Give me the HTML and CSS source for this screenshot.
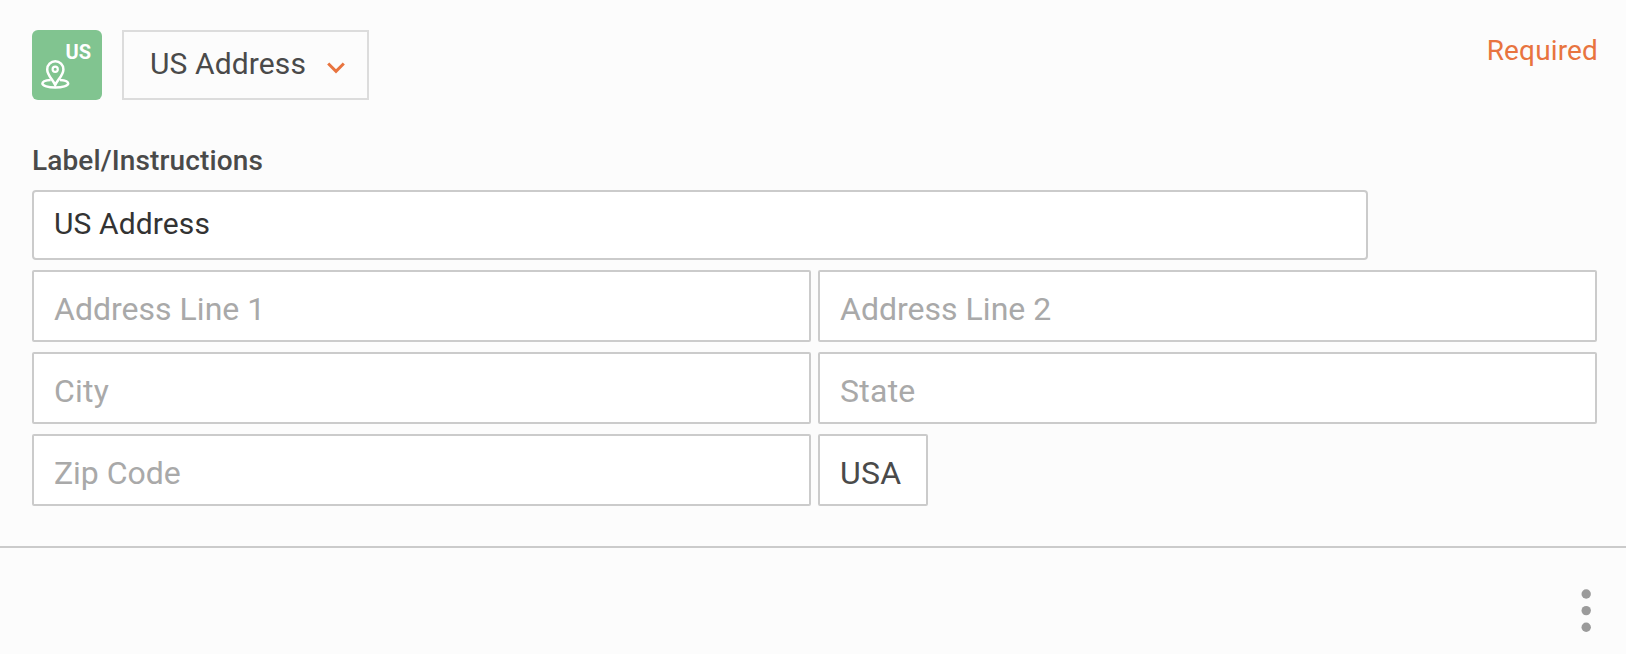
FILE: index.html
```html
<!DOCTYPE html>
<html lang="en">
<head>
<meta charset="utf-8">
<title>US Address</title>
<link rel="stylesheet" href="styles.css">
</head>
<body>
<main class="field-card">
  <header class="card-header">
    <div class="type-icon">
      <span class="type-code">US</span>
      <svg class="type-pin" width="29" height="30" viewBox="0 0 29 30" fill="none" stroke="#fff" stroke-width="2.500">
        <path d="M14.200 25C12 19.800 6.200 15.200 6.200 9.400a8.100 8.100 0 0 1 16.200 0C22.400 15.200 16.500 19.800 14.200 25Z"/>
        <circle cx="14.200" cy="9.300" r="2.600" stroke-width="2.200"/>
        <path d="M9.700 20C4.500 20.300 1.400 21.700 1.400 23.500c0 2.300 5.800 4 12.900 4s12.900-1.700 12.900-4c0-1.800-3.100-3.200-8.300-3.500"/>
      </svg>
    </div>
    <button class="type-select" type="button">
      <span class="type-name">US Address</span>
      <svg class="chevron" width="18" height="12" viewBox="0 0 18 12" fill="none" stroke="#e8743f" stroke-width="3">
        <path d="M1.200 1.500 9 9.300 16.800 1.500"/>
      </svg>
    </button>
    <span class="required">Required</span>
  </header>
  <div class="label">Label/Instructions</div>
  <div class="label-input">US Address</div>
  <section class="address-grid">
    <div class="box line">Address Line 1</div>
    <div class="box line">Address Line 2</div>
    <div class="box">City</div>
    <div class="box">State</div>
    <div class="box zip">Zip Code</div>
    <div class="box country">USA</div>
  </section>
</main>
<footer class="card-footer">
  <svg class="more" width="10" height="44" viewBox="0 0 10 44" fill="#9b9b9b">
    <circle cx="5.200" cy="6" r="4.700"/><circle cx="5.200" cy="22.600" r="4.700"/><circle cx="5.200" cy="39.200" r="4.700"/>
  </svg>
</footer>
</body>
</html>
```
FILE: styles.css
```css
* { box-sizing: border-box; }
body {
  margin: 0;
  height: 654px;
  overflow: hidden;
  background: #fcfcfc;
  color: #4a4a4a;
  font-family: Roboto, "Liberation Sans", sans-serif;
  white-space: nowrap;
}
.field-card {
  height: 548px;
  padding: 30px 29px 0 32px;
  border-bottom: 2px solid #cbcbcb;
}
.card-header { display: flex; height: 70px; }
.type-icon {
  display: flex;
  flex-direction: column;
  width: 70px;
  height: 70px;
  padding: 10px 11px 0 9px;
  border-radius: 6px;
  background: #81c490;
}
.type-code {
  align-self: flex-end;
  height: 20px;
  color: #fff;
  font-size: 20px;
  font-weight: 700;
  line-height: 25px;
}
.type-pin { display: block; flex: none; }
.type-select {
  display: flex;
  width: 247px;
  height: 70px;
  margin-left: 20px;
  padding: 0 0 0 26px;
  border: 2px solid #dcdcdc;
  background: none;
  color: #4a4a4a;
  font-family: inherit;
  font-size: 30px;
}
.type-name { line-height: 64px; letter-spacing: 0.12px; width: 177px; text-align: left; }
.chevron { margin-top: 30px; }
.required {
  margin-left: auto;
  margin-right: -1px;
  color: #e8743f;
  font-size: 28px;
  line-height: 42px;
  letter-spacing: 0.15px;
}
.label {
  height: 90px;
  padding-top: 41px;
  font-size: 28px;
  font-weight: 500;
  line-height: 40px;
  letter-spacing: 0.13px;
}
.label-input {
  width: 1336px;
  height: 70px;
  padding-left: 20px;
  border: 2px solid #cbcbcb;
  border-radius: 4px;
  background: #fff;
  color: #333;
  font-size: 30px;
  line-height: 63px;
  letter-spacing: 0.12px;
}
.address-grid {
  display: grid;
  grid-template-columns: 779px 779px;
  grid-auto-rows: 72px;
  gap: 10px 7px;
  margin-top: 10px;
}
.box {
  padding-left: 20px;
  border: 2px solid #cbcbcb;
  border-radius: 2px;
  background: #fff;
  color: #a9a9a9;
  font-size: 32px;
  line-height: 74px;
  letter-spacing: 0.25px;
}
.line { letter-spacing: 0.02px; }
.zip { letter-spacing: -0.05px; }
.country { width: 110px; color: #4a4a4a; }
.card-footer { display: flex; justify-content: flex-end; padding: 40px 35px 0 0; }
```
